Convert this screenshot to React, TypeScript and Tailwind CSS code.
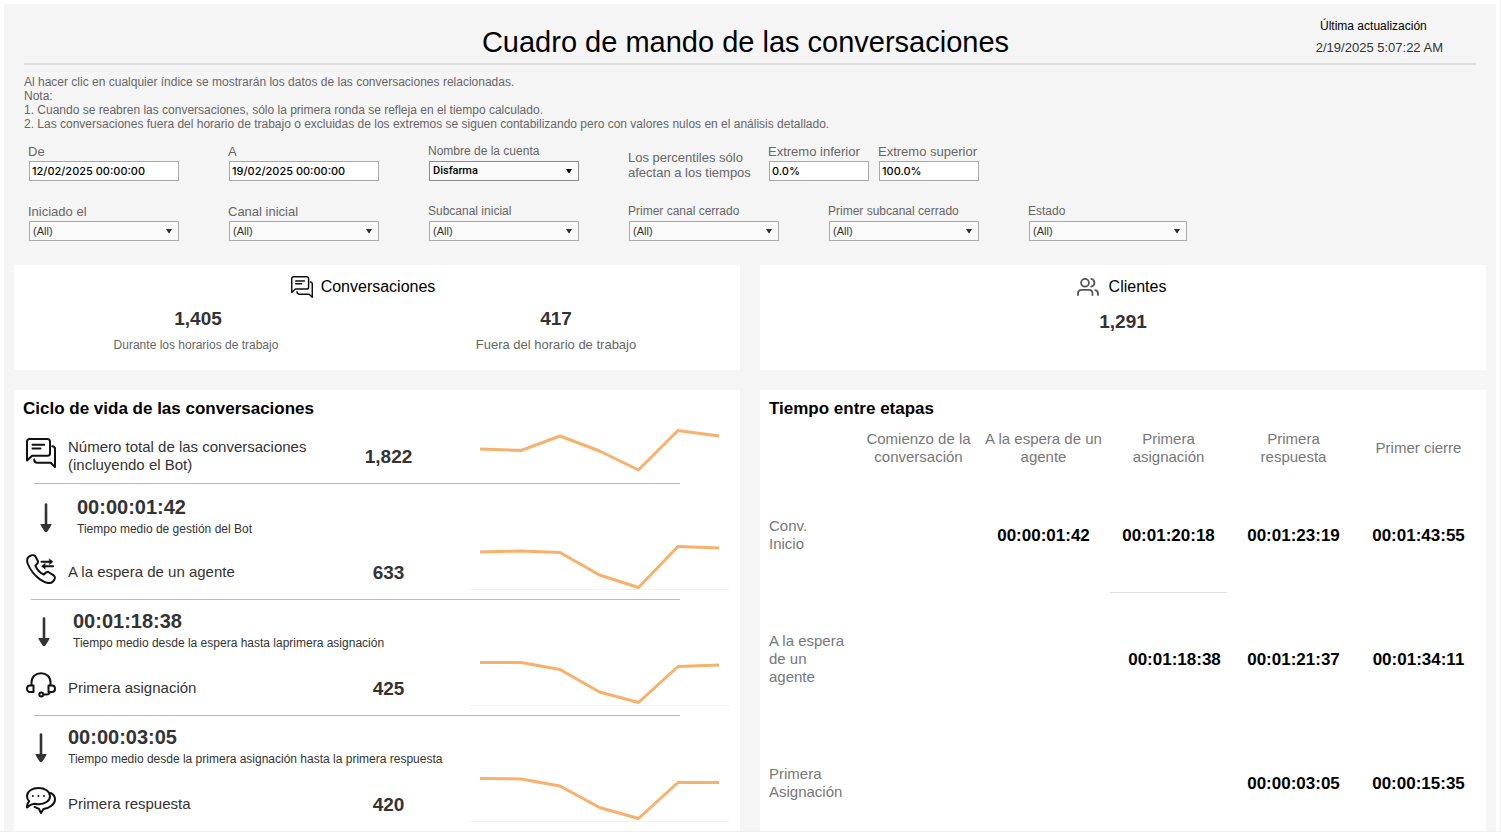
import { ReactNode } from "react";

type SelectFieldProps = {
  id: string;
  label: string;
  value?: string;
  width?: string;
  labelSize?: string;
  dark?: boolean;
};

type Stage = {
  name: ReactNode;
  total: string;
  Icon: (props: { className?: string }) => ReactNode;
  points: string;
  baseline: boolean;
  step?: { time: string; text: string; indent: string };
};

function ChatIcon({ className }: { className?: string }) {
  return (
    <svg viewBox="0 0 30 30" fill="none" stroke="#111" strokeWidth="2" strokeLinejoin="round" strokeLinecap="round" className={className}>
      <path d="M1 22.5V3.5A2.5 2.5 0 0 1 3.5 1h18A2.5 2.5 0 0 1 24 3.5v11.8a2.5 2.5 0 0 1-2.5 2.5H6Z" />
      <path d="M6.5 6.8h11.8M6.5 10.6h8" />
      <path d="M26.3 8.3c1.8 0 2.7.8 2.7 2.5V29l-4.3-4.2H11.5C9.3 24.8 8.2 23.7 8.2 21.5" />
    </svg>
  );
}

function PhoneIcon({ className }: { className?: string }) {
  return (
    <svg viewBox="0 0 30 30" fill="none" stroke="#111" strokeWidth="2" strokeLinejoin="round" strokeLinecap="round" className={className}>
      <path d="M2.5 3C4.5 1.2 7.5.6 9 1.8L12 7.2C12.8 9 10.5 10.3 9.4 11.6C10.9 15.5 14 18.8 17.9 20.5C19.2 19 20.5 17.3 22.4 18L28 21.7C29.5 23 29 25.5 27 27.5C24.3 30.2 19 28.8 14 25.4C8.5 21.4 4 15.5 1.7 9.5C.8 6.8.9 4.5 2.5 3Z" />
      <path d="M15.5 7.7H25M17.5 12.2H27" />
      <path d="M23.5 5 27 7.7 23.5 10.4ZM19 9.5 15.5 12.2 19 14.9Z" fill="#111" strokeWidth=".5" />
    </svg>
  );
}

function HeadsetIcon({ className }: { className?: string }) {
  return (
    <svg viewBox="0 0 30 30" fill="none" stroke="#111" strokeWidth="2" strokeLinejoin="round" strokeLinecap="round" className={className}>
      <path d="M5.5 15V12.5C5.5 7 9.5 3.2 15 3.2S24.5 7 24.5 12.5V15" />
      <path d="M7.5 15.5V22H4C2.2 22 1 20.7 1 18.9S2.2 15.5 4 15.5ZM22.5 15.5V22H26C27.8 22 29 20.7 29 18.9S27.8 15.5 26 15.5Z" />
      <circle cx="15.3" cy="24.6" r="2" />
      <path d="M17.5 24.6H20.5C22.5 24.6 23.5 23.8 24 22" />
    </svg>
  );
}

function BubblesIcon({ className }: { className?: string }) {
  return (
    <svg viewBox="0 0 30 30" fill="none" stroke="#111" strokeWidth="2" strokeLinejoin="round" strokeLinecap="round" className={className}>
      <path d="M1 21.5C.8 19 1.5 17 3.2 15.3C1.7 13.8 1 12 1 10.2C1 5.3 6.2 2 12.5 2S24 5.3 24 10.2S18.8 18.2 12.5 18.2C11 18.2 9.5 18 8.2 17.7C5.5 18 3 19.500 1 21.500Z" />
      <path d="M24.800 7C27.400 8.400 29 10.700 29 13.400C29 18.200 23.500 22.400 17.500 22.900L15 27 12.900 22.700C11.300 22.400 9.800 21.800 8.500 20.800" />
      <g fill="#111" stroke="none">
        <circle cx="6.8" cy="10" r="1" />
        <circle cx="12.4" cy="10" r="1" />
        <circle cx="18" cy="10" r="1" />
      </g>
    </svg>
  );
}

function ClientsIcon({ className }: { className?: string }) {
  return (
    <svg viewBox="0 0 22 18" fill="none" stroke="#555" strokeWidth="1.8" strokeLinecap="round" className={className}>
      <circle cx="8" cy="4.8" r="3.9" />
      <path d="M1 17V15.5C1 13.2 2.5 11.9 4.7 11.9H11.8C14 11.9 15.5 13.2 15.5 15.5V17" />
      <path d="M14.3.9C18.5 2 18.5 7.6 14.3 8.7M18.3 12.1C20.2 12.6 21 13.7 21 15.5V17" />
    </svg>
  );
}

function ArrowDown() {
  return (
    <svg viewBox="0 0 12 30" className="h-[30px] w-3 shrink-0">
      <path d="M6 1.5V24" stroke="#333" strokeWidth="2.6" strokeLinecap="round" />
      <path d="M.8 21.5H11.2L7 28.5H5Z" fill="#333" stroke="#333" strokeWidth="1" strokeLinejoin="round" />
    </svg>
  );
}

function TextField({ id, label, value, width }: { id: string; label: string; value: string; width: string }) {
  return (
    <div className={width}>
      <label htmlFor={id} className="-ml-px block text-[13px] leading-[19px] whitespace-nowrap text-[#666]">
        {label}
      </label>
      <input
        id={id}
        type="text"
        defaultValue={value}
        className="block h-5 w-full border border-[#a8a8a8] bg-white px-[2px] font-['Inter',sans-serif] text-[11px] font-medium text-black"
      />
    </div>
  );
}

function SelectField({ id, label, value = "(All)", width = "w-[150px]", labelSize = "text-xs", dark }: SelectFieldProps) {
  return (
    <div className={width}>
      <label htmlFor={id} className={`-ml-px block leading-[19px] whitespace-nowrap text-[#666] ${labelSize}`}>
        {label}
      </label>
      <div className="relative">
        <select
          id={id}
          className={`block h-5 w-full appearance-none border bg-[#fafafa] px-[3px] text-[11px] ${dark ? "border-[#8c8c8c] font-['Roboto',sans-serif] font-medium text-black" : "border-[#a8a8a8] text-[#333]"}`}
        >
          <option>{value}</option>
        </select>
        <svg viewBox="0 0 6 4" className="pointer-events-none absolute top-2 right-[7px] h-1 w-[6px]">
          <path d="M0 0H6L3.5 4H2.5Z" fill={dark ? "#000" : "#333"} />
        </svg>
      </div>
    </div>
  );
}

const stages: Stage[] = [
  {
    name: (
      <>
        Número total de las conversaciones
        <br />
        (incluyendo el Bot)
      </>
    ),
    total: "1,822",
    Icon: ChatIcon,
    points: "12,35 53,36.5 92,22 131.5,37 170.5,56 210,16.5 251,22",
    baseline: false,
  },
  {
    name: "A la espera de un agente",
    total: "633",
    Icon: PhoneIcon,
    points: "12,22 53,21 92,22.5 131.5,45 170.5,57.5 210,16.5 251,18",
    baseline: true,
    step: { time: "00:00:01:42", text: "Tiempo medio de gestión del Bot", indent: "gap-[25px] pl-[26px] pt-3" },
  },
  {
    name: "Primera asignación",
    total: "425",
    Icon: HeadsetIcon,
    points: "12,16.5 53,16.5 92,23.5 131.5,46 170.5,56.5 210,20.5 251,19",
    baseline: true,
    step: { time: "00:01:18:38", text: "Tiempo medio desde la espera hasta laprimera asignación", indent: "gap-[23px] pl-6 pt-[10px]" },
  },
  {
    name: "Primera respuesta",
    total: "420",
    Icon: BubblesIcon,
    points: "12,16.5 53,17 92,24 131.5,45.5 170.5,56.5 210,20.5 251,20.5",
    baseline: true,
    step: { time: "00:00:03:05", text: "Tiempo medio desde la primera asignación hasta la primera respuesta", indent: "gap-[21px] pl-[21px] pt-[10px]" },
  },
];

const columns = ["Comienzo de la conversación", "A la espera de un agente", "Primera asignación", "Primera respuesta", "Primer cierre"];

const rows = [
  { name: "Conv. Inicio", width: "w-12", height: "h-[124px]", times: ["", "00:00:01:42", "00:01:20:18", "00:01:23:19", "00:01:43:55"] },
  { name: "A la espera de un agente", width: "w-20", height: "h-[124px]", times: ["", "", "00:01:18:38", "00:01:21:37", "00:01:34:11"] },
  { name: "Primera Asignación", width: "w-20", height: "h-[110px]", times: ["", "", "", "00:00:03:05", "00:00:15:35"] },
];

function LifeCycle() {
  return (
    <section className="min-w-0 flex-1 bg-white">
      <h2 className="h-[37px] pt-2 pl-[9px] text-[17px] leading-[22px] font-bold text-black">Ciclo de vida de las conversaciones</h2>
      {stages.map((stage, index) => (
        <div key={stage.total}>
          <div className="flex items-end">
            <div className="min-w-0 flex-1">
              {/* Average time between the previous stage and this one */}
              {stage.step && (
                <div className={`flex h-[59px] ${stage.step.indent}`}>
                  <div className="pt-[7px]">
                    <ArrowDown />
                  </div>
                  <div className="text-[#333]">
                    <p className="text-xl leading-[22px] font-bold">{stage.step.time}</p>
                    <p className="text-xs leading-[22px] whitespace-nowrap">{stage.step.text}</p>
                  </div>
                </div>
              )}
              <div className="flex h-14 items-center pl-3 text-[#333]">
                <stage.Icon className="mb-1 size-[30px] shrink-0" />
                <p className="min-w-0 flex-1 pt-[2px] pl-3 text-[15px] leading-[18px] whitespace-nowrap">{stage.name}</p>
                <p className="w-40 shrink-0 pt-[3px] pl-px text-center text-[19px] leading-6 font-bold">{stage.total}</p>
              </div>
            </div>
            <svg viewBox="0 0 263 60" className="-mt-[13px] mr-[9px] mb-[9px] h-[60px] w-[263px] shrink-0">
              {stage.baseline && <path d="M0 59.5H263" stroke="#f2f2f2" />}
              <polyline points={stage.points} fill="none" stroke="#f8b06a" strokeWidth="3" strokeLinejoin="round" />
            </svg>
          </div>
          {index < stages.length - 1 && <hr className={`mr-[60px] border-[#bbb] ${index === 1 ? "ml-[17px]" : "ml-5"}`} />}
        </div>
      ))}
    </section>
  );
}

function StageTimes() {
  return (
    <section className="min-w-0 flex-1 bg-white">
      <h2 className="h-9 pt-2 pl-[9px] text-[17px] leading-[22px] font-bold text-black">Tiempo entre etapas</h2>
      <div className="pr-[5px] pl-[9px]">
        <table className="w-full table-fixed border-collapse">
          <thead>
            <tr className="h-[47px] text-[15px] leading-[18px] text-[#777]">
              <td className="w-[87px]"></td>
              {columns.map((column) => (
                <th key={column} scope="col" className="px-[2px] pb-[3px] text-center align-middle font-normal">
                  {column}
                </th>
              ))}
            </tr>
          </thead>
          <tbody>
            {rows.map((row, index) => (
              <tr key={row.name} className={row.height}>
                <th scope="row" className={`text-left text-[15px] leading-[18px] font-normal text-[#777] ${index === 2 ? "pt-[14px]" : ""}`}>
                  <div className={row.width}>{row.name}</div>
                </th>
                {row.times.map((time, column) => (
                  <td
                    key={column}
                    className={`relative text-center text-[17px] font-bold text-black ${index === 2 ? "pt-4" : "pt-[2px]"} ${index === 1 && column === 2 ? "pl-3" : ""}`}
                  >
                    {time}
                    {index === 0 && column === 2 && <span className="absolute inset-x-1 bottom-1 border-b border-[#e0e0e0]" />}
                  </td>
                ))}
              </tr>
            ))}
          </tbody>
        </table>
      </div>
    </section>
  );
}

export default function App() {
  return (
    <div className="border-r border-b border-[#f0f0f0] bg-white pt-1 pr-1 pl-1 font-['Liberation_Sans',Arial,sans-serif]">
      <main className="bg-[#f5f5f5]">
        <header className="mx-5 grid h-[61px] grid-cols-[1fr_auto_1fr] border-b-2 border-[#dedede]">
          <h1 className="col-start-2 pt-5 pr-[9px] text-[29px] leading-9 text-black">Cuadro de mando de las conversaciones</h1>
          <div className="justify-self-end pt-3 pr-[33px]">
            <p className="pr-3 text-center text-xs leading-5 text-black">Última actualización</p>
            <p className="text-[13px] leading-6 text-[#333]">2/19/2025 5:07:22 AM</p>
          </div>
        </header>

        <div className="px-5 pt-[10px] text-xs leading-[14px] text-[#666]">
          <p>Al hacer clic en cualquier índice se mostrarán los datos de las conversaciones relacionadas.</p>
          <p>Nota:</p>
          <p>1. Cuando se reabren las conversaciones, sólo la primera ronda se refleja en el tiempo calculado.</p>
          <p>2. Las conversaciones fuera del horario de trabajo o excluidas de los extremos se siguen contabilizando pero con valores nulos en el análisis detallado.</p>
        </div>

        <form className="pt-[11px] pl-[25px]">
          <div className="flex">
            <div className="flex gap-[50px]">
              <TextField id="from" label="De" value="12/02/2025 00:00:00" width="w-[150px]" />
              <TextField id="to" label="A" value="19/02/2025 00:00:00" width="w-[150px]" />
              <SelectField id="account" label="Nombre de la cuenta" value="Disfarma" dark />
              <p className="-ml-px w-[141px] pt-2 text-[13px] leading-[15px] whitespace-nowrap text-[#666]">
                Los percentiles sólo
                <br />
                afectan a los tiempos
              </p>
            </div>
            <div className="flex gap-[10px]">
              <TextField id="low" label="Extremo inferior" value="0.0%" width="w-[100px]" />
              <TextField id="high" label="Extremo superior" value="100.0%" width="w-[100px]" />
            </div>
          </div>
          <div className="flex gap-[50px] pt-[21px]">
            <SelectField id="started" label="Iniciado el" labelSize="text-[13px]" />
            <SelectField id="channel" label="Canal inicial" labelSize="text-[13px]" />
            <SelectField id="subchannel" label="Subcanal inicial" />
            <SelectField id="closed-channel" label="Primer canal cerrado" />
            <SelectField id="closed-subchannel" label="Primer subcanal cerrado" />
            <SelectField id="status" label="Estado" width="w-[158px]" />
          </div>
        </form>

        <div className="grid grid-cols-2 gap-5 px-[10px] pt-6">
          <section className="h-[105px] bg-white px-[5px] pt-[10px]">
            <h2 className="flex items-center justify-center gap-2 pr-7 text-base leading-[22px] text-black">
              <ChatIcon className="size-[22px]" />
              <span className="pt-px">Conversaciones</span>
            </h2>
            <div className="grid grid-cols-2 pt-[9px] text-center">
              <div>
                <p className="text-[19px] leading-6 font-bold text-[#333]">1,405</p>
                <p className="pt-[2px] pr-1 text-xs leading-6 text-[#666]">Durante los horarios de trabajo</p>
              </div>
              <div>
                <p className="text-[19px] leading-6 font-bold text-[#333]">417</p>
                <p className="pt-[2px] text-[13px] leading-6 text-[#666]">Fuera del horario de trabajo</p>
              </div>
            </div>
          </section>
          <section className="h-[105px] bg-white pt-[10px] text-center">
            <h2 className="flex items-center justify-center gap-[10px] pr-[3px] text-base leading-[22px] text-black">
              <ClientsIcon className="h-[18px] w-[22px]" />
              <span className="pt-px">Clientes</span>
            </h2>
            <p className="pt-3 text-[19px] leading-6 font-bold text-[#333]">1,291</p>
          </section>
        </div>

        <div className="flex gap-5 px-[10px] pt-5">
          <LifeCycle />
          <StageTimes />
        </div>
      </main>
    </div>
  );
}
